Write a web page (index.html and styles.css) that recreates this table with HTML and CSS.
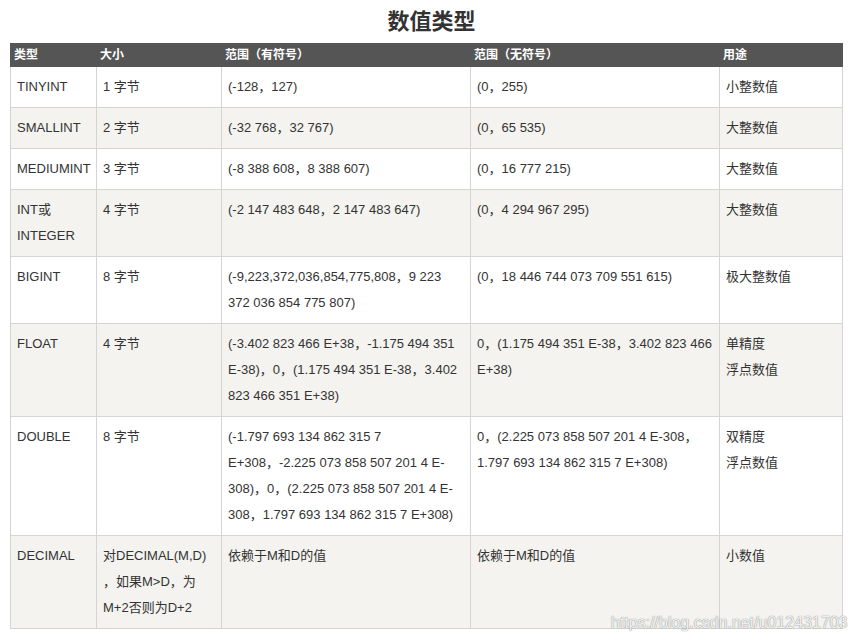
FILE: index.html
```html
<!DOCTYPE html>
<html lang="zh-CN">
<head>
<meta charset="utf-8">
<title>数值类型</title>
<link rel="stylesheet" href="styles.css">
</head>
<body>
<div class="page">
  <h2 class="title">数值类型</h2>
  <table class="reference">
    <colgroup>
      <col class="c1"><col class="c2"><col class="c3"><col class="c4"><col class="c5">
    </colgroup>
    <thead>
      <tr><th>类型</th><th>大小</th><th>范围（有符号）</th><th>范围（无符号）</th><th>用途</th></tr>
    </thead>
    <tbody>
      <tr><td>TINYINT</td><td>1 字节</td><td>(-128，127)</td><td>(0，255)</td><td>小整数值</td></tr>
      <tr><td>SMALLINT</td><td>2 字节</td><td>(-32 768，32 767)</td><td>(0，65 535)</td><td>大整数值</td></tr>
      <tr><td>MEDIUMINT</td><td>3 字节</td><td>(-8 388 608，8 388 607)</td><td>(0，16 777 215)</td><td>大整数值</td></tr>
      <tr><td>INT或INTEGER</td><td>4 字节</td><td>(-2 147 483 648，2 147 483 647)</td><td>(0，4 294 967 295)</td><td>大整数值</td></tr>
      <tr><td>BIGINT</td><td>8 字节</td><td>(-9,223,372,036,854,775,808，9 223 372 036 854 775 807)</td><td>(0，18 446 744 073 709 551 615)</td><td>极大整数值</td></tr>
      <tr><td>FLOAT</td><td>4 字节</td><td>(-3.402 823 466 E+38，-1.175 494 351 E-38)，0，(1.175 494 351 E-38，3.402 823 466 351 E+38)</td><td>0，(1.175 494 351 E-38，3.402 823 466 E+38)</td><td>单精度<br>浮点数值</td></tr>
      <tr><td>DOUBLE</td><td>8 字节</td><td>(-1.797 693 134 862 315 7 E+308，-2.225 073 858 507 201 4 E-308)，0，(2.225 073 858 507 201 4 E-308，1.797 693 134 862 315 7 E+308)</td><td>0，(2.225 073 858 507 201 4 E-308，1.797 693 134 862 315 7 E+308)</td><td>双精度<br>浮点数值</td></tr>
      <tr><td>DECIMAL</td><td>对DECIMAL(M,D) ，如果M&gt;D，为M+2否则为D+2</td><td>依赖于M和D的值</td><td>依赖于M和D的值</td><td>小数值</td></tr>
    </tbody>
  </table>
  <div class="watermark">https://blog.csdn.net/u012431703</div>
</div>
</body>
</html>
```

FILE: styles.css
```css
html, body {
  margin: 0;
  padding: 0;
  background: #fff;
}
body {
  font-family: "Liberation Sans", Arial, "Noto Sans CJK SC", sans-serif;
  color: #333;
}
.page {
  position: relative;
  padding: 7px 0 0 10px;
  width: 846px;
  height: 635px;
}
.title {
  margin: 0 0 6px 0;
  width: 843px;
  text-align: center;
  font-size: 22px;
  line-height: 30px;
  font-weight: bold;
  color: #333;
}
.reference {
  border-collapse: collapse;
  table-layout: fixed;
  width: 832px;
  font-size: 13px;
}
.reference .c1 { width: 86px; }
.reference .c2 { width: 125px; }
.reference .c3 { width: 249px; }
.reference .c4 { width: 249px; }
.reference .c5 { width: 123px; }
.reference th {
  background: #555;
  color: #fff;
  border: 1px solid #555;
  font-size: 12px;
  font-weight: bold;
  line-height: 16px;
  padding: 3px;
  text-align: left;
  vertical-align: top;
}
.reference td {
  border: 1px solid #d4d4d4;
  line-height: 26px;
  padding: 7px 4px 7px 6px;
  vertical-align: top;
}
.reference td:first-child {
  padding-right: 1px;
}
.reference tbody tr:nth-child(even) {
  background: #f4f3f0;
}
.watermark {
  position: absolute;
  left: 611px;
  top: 613px;
  font-family: "Liberation Sans", Arial, sans-serif;
  font-size: 16px;
  line-height: 20px;
  color: rgba(255, 255, 255, 0.9);
  text-shadow: 0 0 1px rgba(110, 110, 110, 0.8), 0 0 1px rgba(110, 110, 110, 0.5);
}
```
